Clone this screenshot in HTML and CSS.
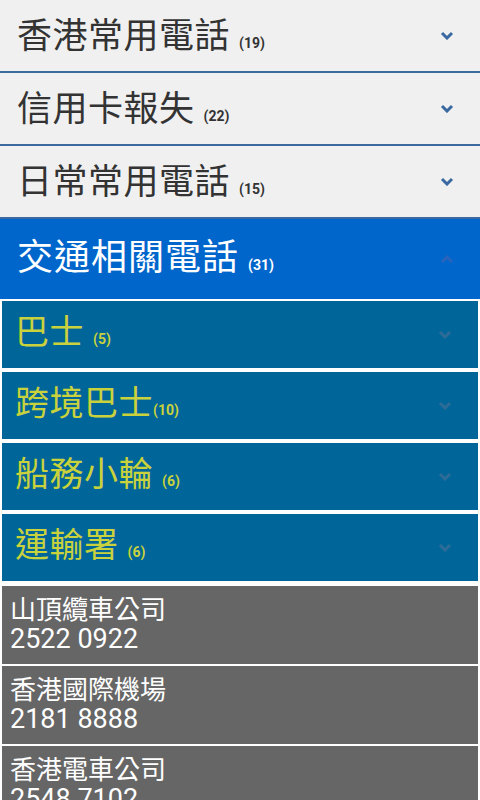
FILE: index.html
```html
<!DOCTYPE html>
<html lang="zh-Hant">
<head>
<meta charset="utf-8">
<link rel="stylesheet" href="styles.css">
</head>
<body>
<div class="app">
  <div class="group">
    <div class="title"><span class="name">香港常用電話</span><span class="count">(19)</span></div>
    <svg class="chev" width="14" height="9" viewBox="0 0 14 9"><polyline points="2,2 7,7 12,2"/></svg>
  </div>
  <div class="group">
    <div class="title"><span class="name">信用卡報失</span><span class="count">(22)</span></div>
    <svg class="chev" width="14" height="9" viewBox="0 0 14 9"><polyline points="2,2 7,7 12,2"/></svg>
  </div>
  <div class="group">
    <div class="title"><span class="name">日常常用電話</span><span class="count">(15)</span></div>
    <svg class="chev" width="14" height="9" viewBox="0 0 14 9"><polyline points="2,2 7,7 12,2"/></svg>
  </div>
  <div class="group open">
    <div class="title"><span class="name">交通相關電話</span><span class="count">(31)</span></div>
    <svg class="chev" width="14" height="9" viewBox="0 0 14 9"><polyline points="2,7 7,2 12,7"/></svg>
  </div>
  <div class="subs">
    <div class="sub">
      <div class="title"><span class="name">巴士</span><span class="count">(5)</span></div>
      <svg class="chev" width="14" height="9" viewBox="0 0 14 9"><polyline points="2,2 7,7 12,2"/></svg>
    </div>
    <div class="sub">
      <div class="title"><span class="name">跨境巴士</span><span class="count tight">(10)</span></div>
      <svg class="chev" width="14" height="9" viewBox="0 0 14 9"><polyline points="2,2 7,7 12,2"/></svg>
    </div>
    <div class="sub">
      <div class="title"><span class="name">船務小輪</span><span class="count">(6)</span></div>
      <svg class="chev" width="14" height="9" viewBox="0 0 14 9"><polyline points="2,2 7,7 12,2"/></svg>
    </div>
    <div class="sub">
      <div class="title"><span class="name">運輸署</span><span class="count">(6)</span></div>
      <svg class="chev" width="14" height="9" viewBox="0 0 14 9"><polyline points="2,2 7,7 12,2"/></svg>
    </div>
  </div>
  <div class="items">
    <div class="item"><div class="iname">山頂纜車公司</div><div class="phone">2522 0922</div></div>
    <div class="item"><div class="iname">香港國際機場</div><div class="phone">2181 8888</div></div>
    <div class="item"><div class="iname">香港電車公司</div><div class="phone">2548 7102</div></div>
  </div>
</div>
</body>
</html>
```

FILE: styles.css
```css
html, body {
  margin: 0;
  padding: 0;
  background: #ffffff;
}
body {
  font-family: Roboto, "Noto Sans CJK TC", "Noto Sans", sans-serif;
  width: 480px;
  height: 800px;
  overflow: hidden;
}
.app {
  display: flex;
  flex-direction: column;
}
.group {
  height: 71px;
  background: #f0f0f0;
  border-bottom: 2px solid #3d6a9e;
  display: flex;
  align-items: center;
  justify-content: space-between;
  padding: 0 26px 0 17px;
}
.title {
  display: flex;
  align-items: baseline;
  margin-bottom: 6px;
}
.name {
  font-family: "Noto Sans CJK TC", sans-serif;
  font-size: 35px;
  line-height: 40px;
  color: #333333;
  letter-spacing: 0.5px;
}
.count {
  font-family: Roboto, sans-serif;
  font-weight: bold;
  font-size: 14px;
  color: #333333;
  margin-left: 9px;
}
.count.tight {
  margin-left: 0;
}
.chev polyline {
  fill: none;
  stroke: #3a68a0;
  stroke-width: 3;
}
.group.open {
  height: 80px;
  background: #0066cc;
  border-bottom: none;
  margin-bottom: 2px;
}
.group.open .title {
  margin-bottom: 10px;
}
.group.open .name {
  color: #ffffff;
  font-size: 36px;
  letter-spacing: 1px;
}
.group.open .count {
  color: #ffffff;
}
.group.open .chev polyline {
  stroke: #2a64ba;
}
.subs {
  display: flex;
  flex-direction: column;
  gap: 4px;
  padding: 0 2px;
}
.sub {
  height: 67px;
  background: #006699;
  display: flex;
  align-items: center;
  justify-content: space-between;
  padding: 0 26px 0 13px;
}
.sub .title {
  margin-bottom: 10px;
}
.sub .name {
  font-size: 34px;
  color: #c9d23c;
}
.sub .count {
  color: #c9d23c;
}
.sub .chev polyline {
  stroke: #2e6c98;
}
.items {
  display: flex;
  flex-direction: column;
  gap: 2px;
  padding: 5px 2px 0;
}
.item {
  height: 78px;
  background: #666666;
  color: #ffffff;
  padding: 6px 8px 0;
  box-sizing: border-box;
}
.iname {
  font-family: "Noto Sans CJK TC", sans-serif;
  font-size: 26px;
  line-height: 32px;
}
.phone {
  font-family: Roboto, sans-serif;
  font-size: 27px;
  line-height: 31px;
}
```
